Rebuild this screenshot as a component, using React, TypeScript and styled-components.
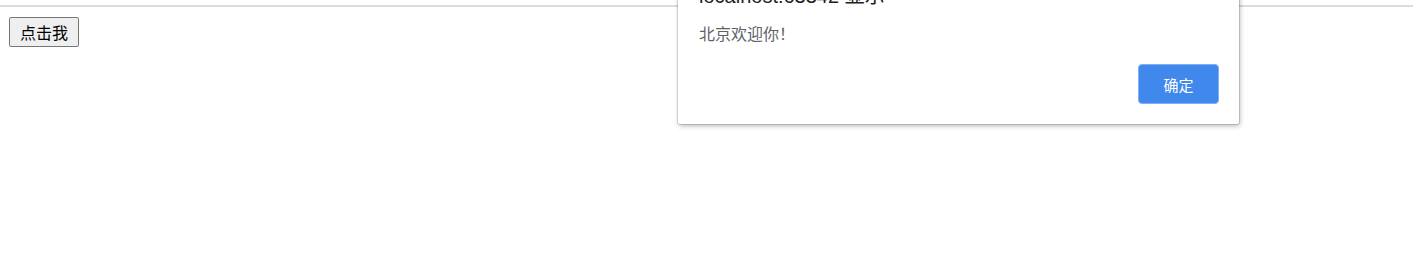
import React from "react";
import styled, { createGlobalStyle } from "styled-components";

const Global = createGlobalStyle`
  html, body { margin: 0; padding: 0; background: #fff; }
  body { font-family: "Microsoft YaHei", "Noto Sans CJK SC", "Liberation Sans", sans-serif; }
`;

const Page = styled.div`
  position: relative;
  width: 1413px;
  height: 265px;
  overflow: hidden;
`;

const TopRule = styled.div`
  height: 5px;
  border-bottom: 2px solid #dcdcdc;
`;

const Content = styled.div`
  padding: 10px 9px;
`;

const PageButton = styled.button`
  display: block;
  height: 30px;
  padding: 0 10px;
  font-family: "Noto Sans CJK SC", sans-serif;
  font-size: 16px;
  color: #000;
  background: #efefef;
  border: 1px solid #767676;
  border-radius: 2px;
  line-height: 1;
`;

const Dialog = styled.div`
  position: absolute;
  left: 678px;
  top: -34px;
  width: 561px;
  box-sizing: border-box;
  padding: 20px 20px 20px 21px;
  background: #fff;
  border-radius: 0 0 2px 2px;
  box-shadow: 0 0 0 1px rgba(0, 0, 0, 0.12), 1px 2px 5px rgba(0, 0, 0, 0.28);
  display: flex;
  flex-direction: column;
`;

const Title = styled.div`
  font-size: 20px;
  line-height: 20px;
  color: #202124;
  font-family: "Liberation Sans", "Noto Sans CJK SC", sans-serif;
  white-space: nowrap;
`;

const Message = styled.div`
  margin-top: 16px;
  font-size: 16px;
  line-height: 22px;
  color: #5f6368;
  font-family: "Noto Sans CJK SC", sans-serif;
`;

const Actions = styled.div`
  margin-top: 20px;
  display: flex;
  justify-content: flex-end;
`;

const OkButton = styled.button`
  width: 81px;
  height: 40px;
  background: #4188ed;
  color: #fff;
  border: 1px solid #7fb0f5;
  border-radius: 4px;
  font-size: 15px;
  font-family: "Noto Sans CJK SC", sans-serif;
  padding: 0;
`;

export default function App() {
  return (
    <Page>
      <Global />
      <TopRule />
      <Content>
        <PageButton>点击我</PageButton>
      </Content>
      <Dialog>
        <Title>localhost:63342 显示</Title>
        <Message>北京欢迎你！</Message>
        <Actions>
          <OkButton>确定</OkButton>
        </Actions>
      </Dialog>
    </Page>
  );
}
